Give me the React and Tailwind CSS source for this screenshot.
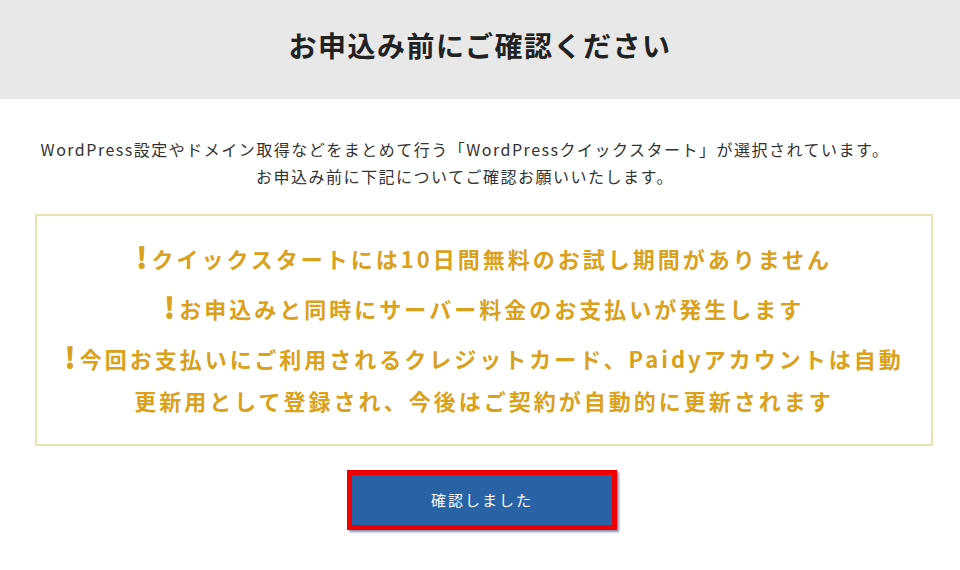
const notices = [
  ["クイックスタートには10日間無料のお試し期間がありません"],
  ["お申込みと同時にサーバー料金のお支払いが発生します"],
  ["今回お支払いにご利用されるクレジットカード、Paidyアカウントは自動", "更新用として登録され、今後はご契約が自動的に更新されます"],
];

const font = { fontFamily: '"Noto Sans CJK JP", "Noto Sans", sans-serif' };

export default function App() {
  return (
    <div className="w-[960px] h-[570px] bg-white overflow-hidden" style={font}>
      <header className="h-[99px] bg-[#e8e8e8] flex items-center justify-center pb-[9px]">
        <h1 className="text-[28px] font-bold tracking-[1.5px] text-[#222] leading-none">
          お申込み前にご確認ください
        </h1>
      </header>

      <div className="pl-[30px] pr-[60px] pt-[37px] text-center text-[16px] leading-[27px] tracking-[1.5px] text-[#333]">
        <p>WordPress設定やドメイン取得などをまとめて行う「WordPressクイックスタート」が選択されています。</p>
        <p>お申込み前に下記についてご確認お願いいたします。</p>
      </div>

      <div className="mx-[35px] mt-[24px] w-[898px] border-2 border-[#e9e5aa] pt-[19px] pb-[23px] flex flex-col gap-[6px] text-center text-[22px] font-bold leading-[42px] tracking-[3px] text-[#d9a11c]">
        {notices.map((lines, i) => (
          <p key={i}>
            <span className="text-[29px] font-black mr-[1px] align-[-1px]">!</span>
            {lines[0]}
            {lines[1] && (
              <>
                <br />
                {lines[1]}
              </>
            )}
          </p>
        ))}
      </div>

      <div className="flex justify-center mt-[24px] pl-[4px]">
        <button className="w-[270px] h-[60px] bg-[#2a62a6] border-[5px] border-[#ee0000] text-white text-[15px] tracking-[2px] shadow-[2px_2px_2px_rgba(40,50,110,0.55)]">
          確認しました
        </button>
      </div>
    </div>
  );
}
